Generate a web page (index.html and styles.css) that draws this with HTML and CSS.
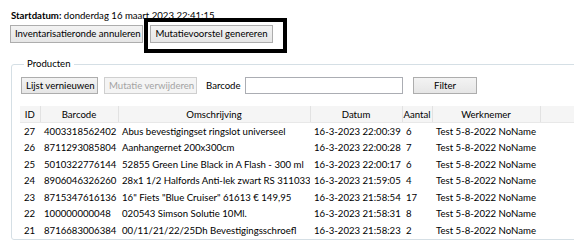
FILE: index.html
```html
<!DOCTYPE html>
<html lang="nl">
<head>
  <meta charset="UTF-8" />
  <title>Inventarisatie</title>
  <link rel="stylesheet" href="styles.css">
</head>
<body>
  <div class="window">
    <div class="start"><b>Startdatum:</b> donderdag 16 maart 2023 22:41:15</div>

    <div class="actions">
      <button class="btn btn-cancel">Inventarisatieronde annuleren</button>
      <button class="btn btn-propose">Mutatievoorstel genereren</button>
      <div class="highlight"></div>
    </div>

    <fieldset class="group">
      <legend>Producten</legend>
      <div class="toolbar">
        <button class="btn btn-refresh">Lijst vernieuwen</button>
        <button class="btn btn-delete" disabled>Mutatie verwijderen</button>
        <label for="barcode">Barcode</label>
        <input type="text" id="barcode" />
        <button class="btn btn-filter">Filter</button>
      </div>

      <table class="grid">
        <colgroup>
          <col class="c-id"><col class="c-barcode"><col class="c-desc"><col class="c-date"><col class="c-qty"><col class="c-user"><col class="c-fill">
        </colgroup>
        <thead>
          <tr><th>ID</th><th>Barcode</th><th>Omschrijving</th><th>Datum</th><th>Aantal</th><th>Werknemer</th><th></th></tr>
        </thead>
        <tbody>
          <tr><td>27</td><td>4003318562402</td><td>Abus bevestigingset ringslot universeel</td><td>16-3-2023 22:00:39</td><td>6</td><td>Test 5-8-2022 NoName</td><td></td></tr>
          <tr><td>26</td><td>8711293085804</td><td>Aanhangernet 200x300cm</td><td>16-3-2023 22:00:28</td><td>7</td><td>Test 5-8-2022 NoName</td><td></td></tr>
          <tr><td>25</td><td>5010322776144</td><td>52855 Green Line Black in A Flash - 300 ml</td><td>16-3-2023 22:00:17</td><td>6</td><td>Test 5-8-2022 NoName</td><td></td></tr>
          <tr><td>24</td><td>8906046326260</td><td>28x1 1/2 Halfords Anti-lek zwart RS 311033</td><td>16-3-2023 21:59:05</td><td>4</td><td>Test 5-8-2022 NoName</td><td></td></tr>
          <tr><td>23</td><td>8715347616136</td><td>16" Fiets "Blue Cruiser" 61613 € 149,95</td><td>16-3-2023 21:58:54</td><td>17</td><td>Test 5-8-2022 NoName</td><td></td></tr>
          <tr><td>22</td><td>100000000048</td><td>020543 Simson Solutie 10Ml.</td><td>16-3-2023 21:58:31</td><td>8</td><td>Test 5-8-2022 NoName</td><td></td></tr>
          <tr><td>21</td><td>8716683006384</td><td>00/11/21/22/25Dh Bevestigingsschroefl</td><td>16-3-2023 21:58:23</td><td>2</td><td>Test 5-8-2022 NoName</td><td></td></tr>
        </tbody>
      </table>
    </fieldset>
  </div>
</body>
</html>
```

FILE: styles.css
```css
body {
  margin: 0;
  background-color: #fff;
  font-family: Lato, "Open Sans", sans-serif;
  font-size: 9.6px;
  color: #000;
  overflow: hidden;
}
.window {
  padding: 9px 0 0 11px;
}
.start {
  height: 13px;
  line-height: 13px;
}
.start b {
  font-weight: bold;
}
.actions {
  position: relative;
  display: flex;
  gap: 7px;
  margin-top: 3px;
  margin-left: -1px;
}
.btn {
  font-family: inherit;
  font-size: 9.6px;
  color: #000;
  height: 18px;
  padding: 0 4px;
  line-height: 14px;
  background: linear-gradient(#f3f3f3, #e6e6e6);
  border: 1px solid #adadad;
  border-radius: 0;
  white-space: nowrap;
}
.btn:disabled {
  color: #a3a3a3;
  background: #f4f4f4;
  border-color: #cfcfcf;
}
.btn-cancel { width: 133px; }
.btn-propose { width: 123px; }
.highlight {
  position: absolute;
  left: 134px;
  top: -7px;
  width: 135px;
  height: 27px;
  border: 4px solid #000;
}
.group {
  margin: 15px -20px 0 0;
  padding: 7px 0 0 9px;
  border: 1px solid #d5dfe5;
  border-radius: 3px;
  min-width: 0;
}
.group legend {
  padding: 0 3px;
  margin-left: 3px;
  line-height: 12px;
}
.toolbar {
  display: flex;
  align-items: center;
  height: 17px;
}
.toolbar .btn {
  height: 17px;
}
.btn-refresh { width: 77px; }
.btn-delete { width: 93px; margin-left: 6px; }
.toolbar label {
  margin-left: 9px;
  width: 39px;
}
.toolbar input {
  width: 158px;
  height: 17px;
  box-sizing: border-box;
  border: 1px solid #abadb3;
  padding: 0 3px;
  font-family: inherit;
  font-size: 9.6px;
}
.btn-filter {
  width: 64px;
  margin-left: 10px;
}
.grid {
  margin-top: 12px;
  margin-left: -1px;
  border-collapse: collapse;
  table-layout: fixed;
  width: 580px;
}
.c-id { width: 20px; }
.c-barcode { width: 78px; }
.c-desc { width: 192px; }
.c-date { width: 92px; }
.c-qty { width: 30px; }
.c-user { width: 108px; }
.grid th {
  height: 16px;
  padding: 0;
  font-weight: normal;
  text-align: center;
  background-color: #f5f5f5;
  border-right: 1px solid #e2e2e2;
  border-bottom: 1px solid #e8e8e8;
  white-space: nowrap;
  overflow: hidden;
}
.grid td {
  height: 16.5px;
  padding: 0 0 0 4px;
  white-space: nowrap;
  overflow: hidden;
}
```
